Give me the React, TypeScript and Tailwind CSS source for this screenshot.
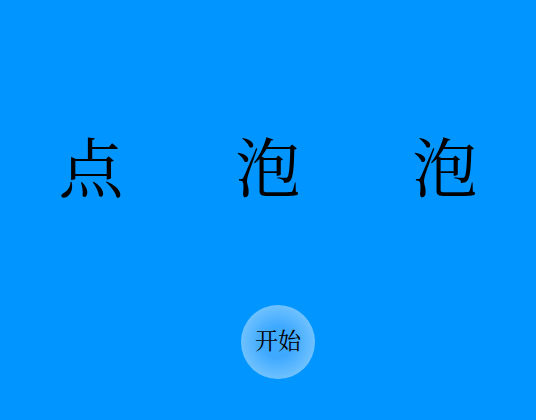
import React from "react";

export default function App() {
  const chars = ["点", "泡", "泡"];
  return (
    <div
      className="w-[536px] h-[420px] bg-[#0095ff] flex flex-col overflow-hidden"
      style={{ fontFamily: '"Liberation Serif", "Noto Serif CJK SC", serif' }}
    >
      <div className="grid grid-cols-[177px_177px_177px] justify-center mt-[128px] h-[84px] items-center">
        {chars.map((c, i) => (
          <div key={i} className="flex justify-center text-[65px] leading-none text-black">
            {c}
          </div>
        ))}
      </div>
      <div className="flex justify-center mt-[93px] pl-[20px]">
        <button className="w-[74px] h-[74px] rounded-full bg-[radial-gradient(circle,#3fa9ff_30%,#6cc0ff_68%,#bde2ff_100%)] flex items-center justify-center text-[23px] text-black">
          开始
        </button>
      </div>
    </div>
  );
}
